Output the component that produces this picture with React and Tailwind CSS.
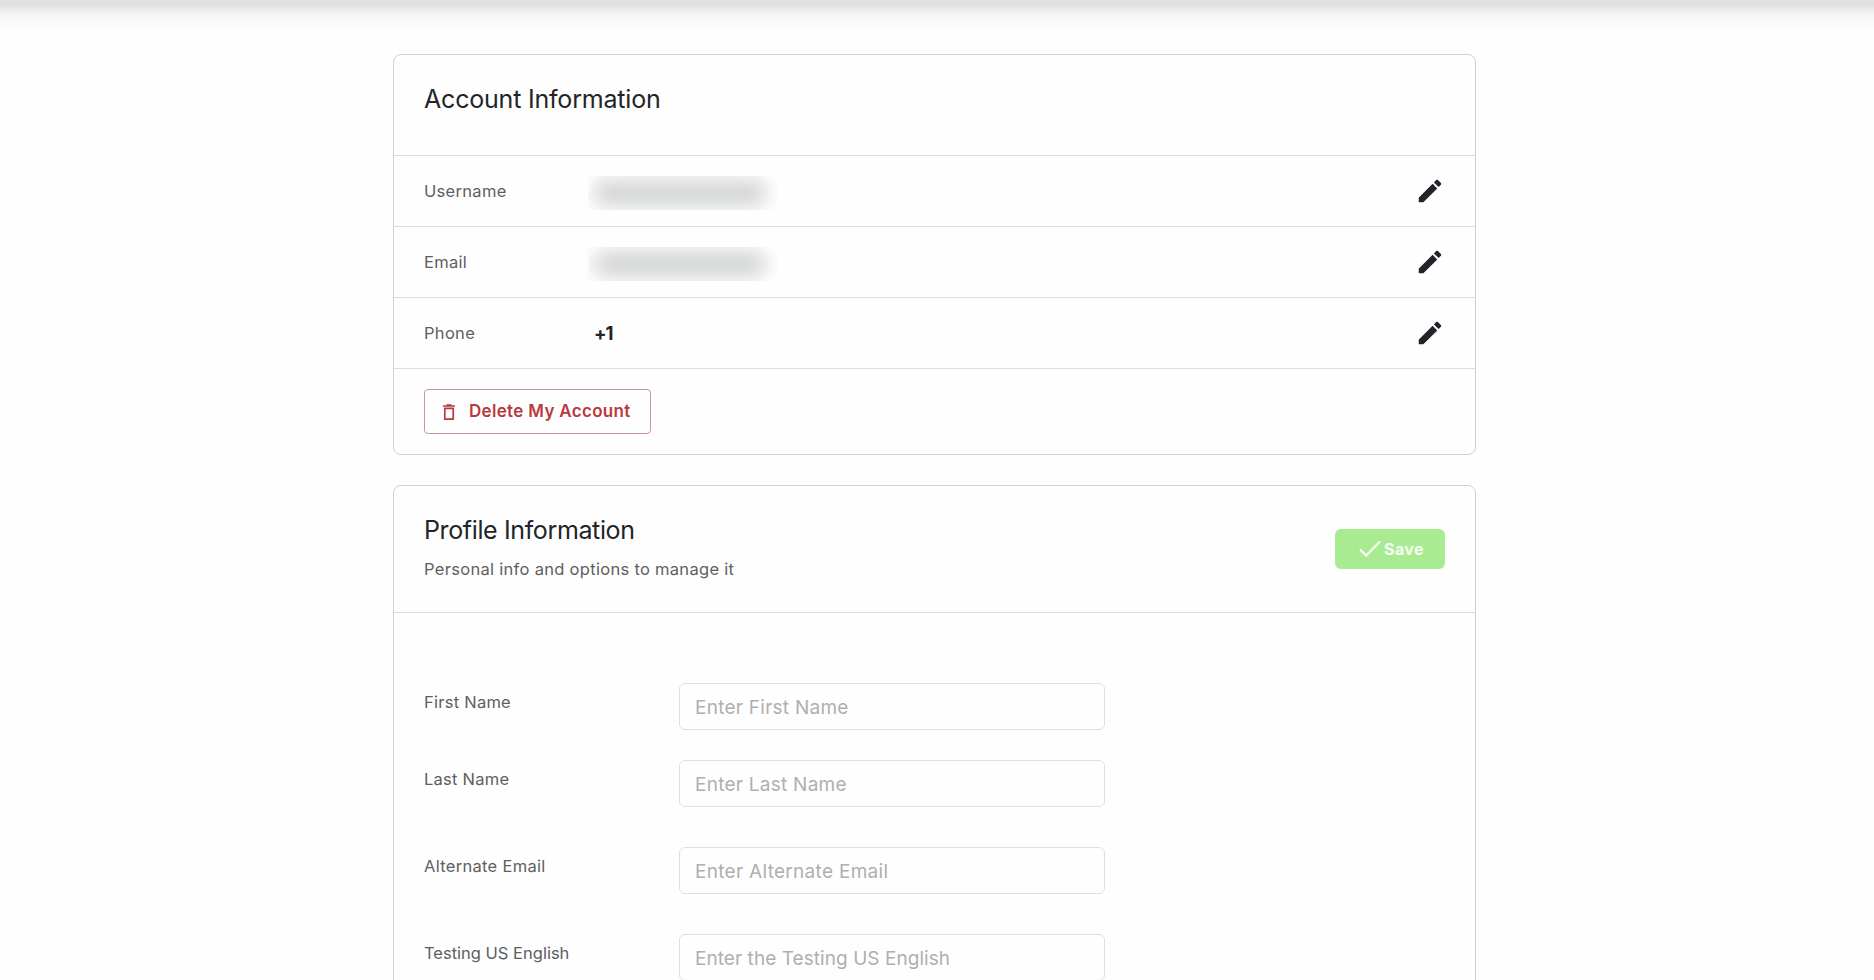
import React from "react";

const accountRows = [
  { label: "Username", redacted: true },
  { label: "Email", redacted: true },
  { label: "Phone", value: "+1" },
];

const profileFields = [
  { label: "First Name", placeholder: "Enter First Name", gap: "mt-[70px]", labelSpacing: "tracking-[0.25px]", spacing: "tracking-[0.26px]" },
  { label: "Last Name", placeholder: "Enter Last Name", gap: "mt-[30px]", labelSpacing: "tracking-[0.25px]", spacing: "tracking-[0.26px]" },
  { label: "Alternate Email", placeholder: "Enter Alternate Email", gap: "mt-10", labelSpacing: "tracking-[0.3px]", spacing: "tracking-[0.3px]" },
  { label: "Testing US English", placeholder: "Enter the Testing US English", gap: "mt-10", labelSpacing: "tracking-normal", spacing: "tracking-[0.06px]" },
];

const PencilIcon = () => (
  <svg viewBox="0 0 24 24" className="size-[30px]" fill="currentColor">
    <path d="M3 17.46v3.04c0 .28.22.5.5.5h3.04c.13 0 .26-.05.35-.15L17.81 9.94l-3.75-3.75L3.15 17.1c-.1.1-.15.22-.15.36zM20.71 7.04c.39-.39.39-1.02 0-1.41l-2.34-2.34c-.39-.39-1.02-.39-1.41 0l-1.83 1.83 3.75 3.75 1.83-1.83z" />
  </svg>
);

const TrashIcon = () => (
  <svg viewBox="0 0 12 16" className="w-3 h-4" fill="none" stroke="currentColor" strokeWidth="1.7">
    <path d="M0 2h12M3.5 1h5" />
    <path d="M1.8 4.4h8.4v10.7H1.8z" />
  </svg>
);

const CheckIcon = () => (
  <svg viewBox="0 0 22 18" className="w-[22px] h-[18px]" fill="none" stroke="currentColor" strokeWidth="2.4">
    <path d="M1 9.5l6.2 6L21 1.5" />
  </svg>
);

const App = () => {
  return (
    <div className="h-screen overflow-hidden bg-[#fefefe] font-['Inter',sans-serif] text-[#212529]">
      {/* Shadow of the top bar */}
      <div className="h-1.5 bg-[#e1e1e1]" />
      <div className="h-12 bg-[linear-gradient(to_bottom,#e1e1e1_0,#ececec_4px,#f4f4f4_8px,#f9f9f9_14px,#fefefe_25px)]" />

      <main className="ml-[393px] w-[1083px] flex flex-col gap-[30px]">
        <section className="border border-[#cfd0d0] rounded-lg">
          <div className="h-[101px] border-b border-[#dcdddd] px-[30px] pt-[26px]">
            <h2 className="text-[25px] leading-9 tracking-[-0.2px]">Account Information</h2>
          </div>

          {accountRows.map((row) => (
            <div key={row.label} className="h-[71px] border-b border-[#dcdddd] px-[30px] flex items-center">
              <div className="w-[164px] text-[16.5px] tracking-[0.3px] text-[#5d6060]">{row.label}</div>
              {row.redacted ? (
                <div className="mt-1 w-[190px] h-[34px] overflow-hidden">
                  <div className="mt-[3px] ml-1.5 w-[172px] h-7 rounded-xl bg-[#d6d7d7] blur-[9px]" />
                </div>
              ) : (
                <div className="mt-0.5 pl-1.5 text-[18.5px] tracking-[-1px] font-bold">{row.value}</div>
              )}
              <button className="ml-auto">
                <PencilIcon />
              </button>
            </div>
          ))}

          <div className="h-[85px] px-[30px] pt-5">
            <button className="w-[227px] h-[45px] border border-[#c9959a] rounded pl-[18px] flex items-center text-[#b73a40]">
              <TrashIcon />
              <span className="ml-[14px] text-[17px] tracking-[0.32px] font-semibold whitespace-nowrap">Delete My Account</span>
            </button>
          </div>
        </section>

        <section className="h-[560px] border border-[#cfd0d0] rounded-lg">
          <div className="h-[127px] border-b border-[#dcdddd] px-[30px] flex justify-between">
            <div className="pt-[26px]">
              <h2 className="text-[25px] leading-9 tracking-[-0.37px]">Profile Information</h2>
              <p className="mt-[9px] text-[16.5px] leading-6 tracking-[0.3px] text-[#5d6060]">Personal info and options to manage it</p>
            </div>
            <button className="mt-[43px] w-[110px] h-10 rounded-md bg-[#a8eb90] text-white/90 pl-6 flex items-center">
              <CheckIcon />
              <span className="ml-[3px] text-[16px] tracking-[0.4px] font-bold">Save</span>
            </button>
          </div>

          {profileFields.map((field) => (
            <div key={field.label} className={`${field.gap} pl-[30px] flex`}>
              <label className={`${field.labelSpacing} w-[255px] pt-[7px] text-[16.5px] leading-6 text-[#5d6060]`}>{field.label}</label>
              <input
                type="text"
                placeholder={field.placeholder}
                className={`${field.spacing} w-[426px] h-[47px] border border-[#dfdfdf] rounded-md pl-[15px] pr-4 pt-0.5 text-[19px] placeholder:text-[#afafaf]`}
              />
            </div>
          ))}
        </section>
      </main>
    </div>
  );
};

export default App;
